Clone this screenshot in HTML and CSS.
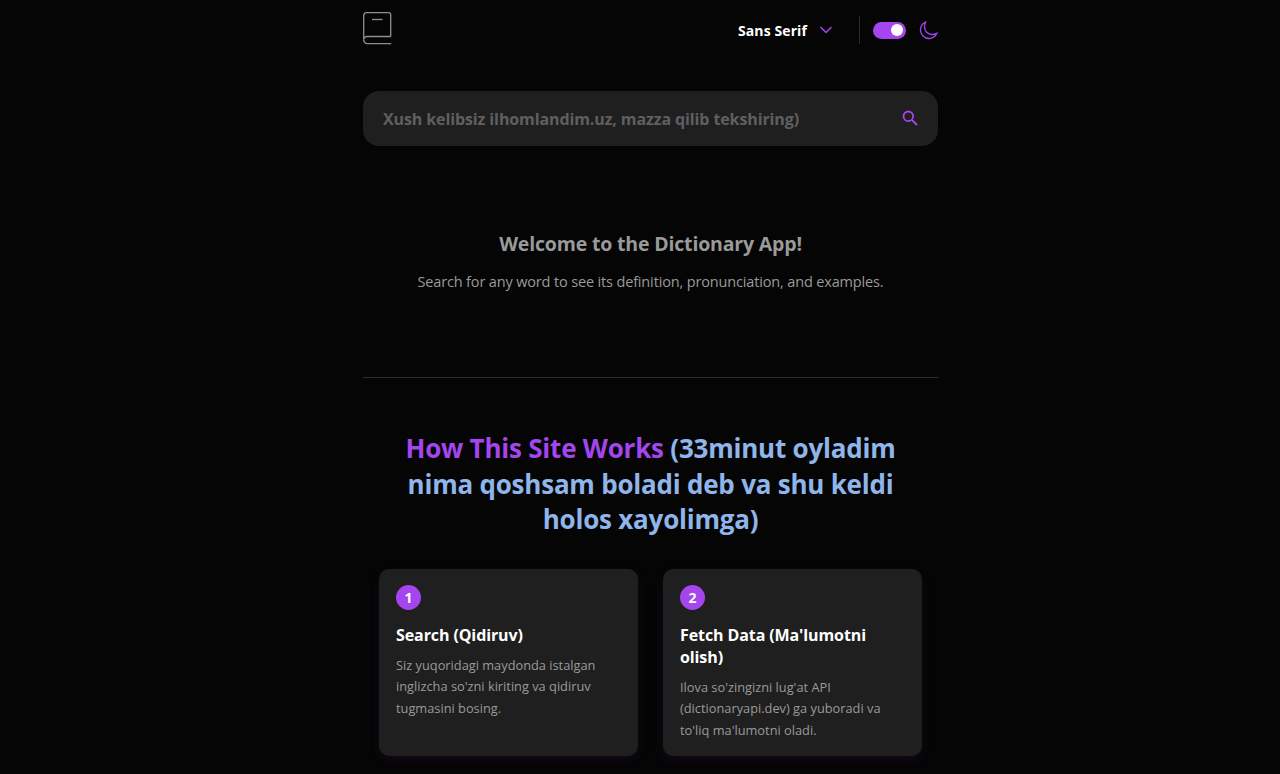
FILE: index.html
```html
<!DOCTYPE html>
<html lang="en">
<head>
  <meta charset="UTF-8">
  <title>Dictionary App</title>
  <link rel="stylesheet" href="styles.css">
</head>
<body>
  <div class="container">
    <header>
      <svg class="logo" width="29" height="33" viewBox="0 0 29 33" fill="none" stroke="#8f8f8f" stroke-width="1.300">
        <path d="M27.700 24.500H4a3.300 3.300 0 0 0-3.300 3.300V3.500A2.800 2.800 0 0 1 3.500.7h22.400a1.800 1.800 0 0 1 1.800 1.800v22"/>
        <path d="M.7 27.800A3.600 3.600 0 0 0 4.300 31.600h23.900"/>
        <path d="M9 7.500h10.500"/>
      </svg>
      <div class="controls">
        <div class="font-select">
          <span>Sans Serif</span>
          <svg width="14" height="8" viewBox="0 0 14 8" fill="none" stroke="#a445ed" stroke-width="1.500"><path d="M1.500 1l5.500 5.500L12.500 1"/></svg>
        </div>
        <div class="divider"></div>
        <div class="toggle"><span class="knob"></span></div>
        <svg width="19" height="19" viewBox="0 0 20 20" fill="none" stroke="#a445ed" stroke-width="1.400"><path d="M6.800 1.200a9 9 0 1 0 12 11.800 9.500 9.500 0 0 1-5 1.200C9 14.200 5.600 10 5.800 6.200c0-1.800.4-3.500 1-5z"/></svg>
      </div>
    </header>

    <div class="search">
      <span class="placeholder">Xush kelibsiz ilhomlandim.uz, mazza qilib tekshiring)</span>
      <svg class="search-icon" width="16" height="16" viewBox="0 0 16 16" fill="none" stroke="#a445ed" stroke-width="1.800"><circle cx="6.300" cy="6.300" r="4.800"/><path d="M10 10l5 5"/></svg>
    </div>

    <section class="welcome">
      <h2>Welcome to the Dictionary App!</h2>
      <p>Search for any word to see its definition, pronunciation, and examples.</p>
    </section>

    <section class="how">
      <h2><span class="accent">How This Site Works</span> (33minut oyladim nima qoshsam boladi deb va shu keldi holos xayolimga)</h2>
      <div class="cards">
        <div class="card">
          <div class="num">1</div>
          <h3>Search (Qidiruv)</h3>
          <p>Siz yuqoridagi maydonda istalgan inglizcha so'zni kiriting va qidiruv tugmasini bosing.</p>
        </div>
        <div class="card">
          <div class="num">2</div>
          <h3>Fetch Data (Ma'lumotni olish)</h3>
          <p>Ilova so'zingizni lug'at API (dictionaryapi.dev) ga yuboradi va to'liq ma'lumotni oladi.</p>
        </div>
      </div>
    </section>
  </div>
</body>
</html>
```

FILE: styles.css
```css
* { margin: 0; padding: 0; box-sizing: border-box; font-family: 'Open Sans', 'Noto Sans', sans-serif; }
html, body { height: 774px; overflow: hidden; }
body { background: #050505; color: #fff; padding-left: 21px; }
.container { width: 575px; margin: 0 auto; }
header { display: flex; justify-content: space-between; align-items: flex-start; padding-top: 12px; height: 91px; }
.logo { display: block; }
.controls { display: flex; align-items: center; height: 36px; }
.font-select { display: flex; align-items: center; gap: 12px; font-size: 14px; font-weight: 700; letter-spacing: 0.1px; }
.divider { width: 1px; height: 28px; background: #2a2a2a; margin: 0 13px 0 26px; }
.toggle { width: 33px; height: 17px; border-radius: 9px; background: #a445ed; display: flex; align-items: center; justify-content: flex-end; padding-right: 3px; margin-right: 13px; }
.knob { width: 12px; height: 12px; border-radius: 50%; background: #fff; }
.search { height: 55px; background: #1f1f1f; border-radius: 16px; display: flex; align-items: center; justify-content: space-between; padding: 0 20px; }
.search-icon { margin-bottom: 2px; }
.placeholder { font-size: 16px; font-weight: 700; color: #5f5f5f; letter-spacing: -0.11px; }
.welcome { text-align: center; padding-top: 84px; height: 232px; border-bottom: 1px solid #2e2e2e; }
.welcome h2 { font-size: 19.500px; line-height: 28px; color: #9a9a9a; letter-spacing: -0.17px; }
.welcome p { font-size: 14.500px; line-height: 22px; color: #9a9a9a; margin-top: 13px; letter-spacing: -0.15px; }
.how { padding: 53px 16px 0; }
.how h2 { font-size: 26px; line-height: 35.500px; text-align: center; color: #8fb5ea; letter-spacing: -0.22px; }
.accent { color: #a445ed; }
.cards { display: grid; grid-template-columns: 259px 259px; gap: 25px; margin-top: 31px; }
.card { height: 187px; background: #1f1f1f; border-radius: 10px; padding: 16px 17px; box-shadow: 0 4px 12px rgba(164, 69, 237, 0.08); }
.num { width: 25px; height: 25px; border-radius: 50%; background: #a445ed; color: #fff; font-size: 14px; font-weight: 700; display: flex; align-items: center; justify-content: center; }
.card h3 { font-size: 16px; line-height: 22px; font-weight: 700; margin-top: 14px; letter-spacing: -0.1px; }
.card p { font-size: 12.800px; line-height: 21.500px; color: #9a9a9a; margin-top: 9px; letter-spacing: 0; }
```
